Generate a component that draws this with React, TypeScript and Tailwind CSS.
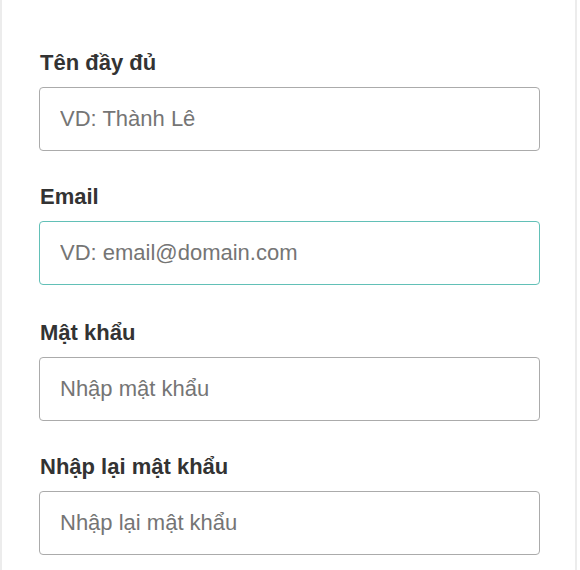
const fields = [
  { label: 'Tên đầy đủ', placeholder: 'VD: Thành Lê', gap: 'mb-[32px]' },
  { label: 'Email', placeholder: 'VD: email@domain.com', gap: 'mb-[34px]', focused: true },
  { label: 'Mật khẩu', placeholder: 'Nhập mật khẩu', gap: 'mb-[32px]' },
  { label: 'Nhập lại mật khẩu', placeholder: 'Nhập lại mật khẩu', gap: 'mb-[32px]' },
]

export default function App() {
  return (
    <div className="flex h-[570px] w-[580px] bg-white font-['Liberation_Sans',Arial,sans-serif]">
      <div className="h-full w-[577px] overflow-hidden border-x-2 border-[#ececec] bg-white px-[37px] pt-[49px]">
        {fields.map((f) => (
          <div key={f.label} className={f.gap}>
            <label className="block h-[28px] pl-px text-[22px] font-bold leading-[28px] text-[#333]">{f.label}</label>
            <input
              type="text"
              placeholder={f.placeholder}
              className={
                f.focused
                  ? 'mt-[10px] block h-[64px] w-[501px] rounded-[4px] border border-[#62c0b7] bg-white px-[20px] text-[22px] text-[#333] outline-none placeholder:text-[#757575]'
                  : 'mt-[10px] block h-[64px] w-[501px] rounded-[4px] border border-[#ababab] bg-white px-[20px] text-[22px] text-[#333] outline-none placeholder:text-[#757575]'
              }
            />
          </div>
        ))}
      </div>
    </div>
  )
}
